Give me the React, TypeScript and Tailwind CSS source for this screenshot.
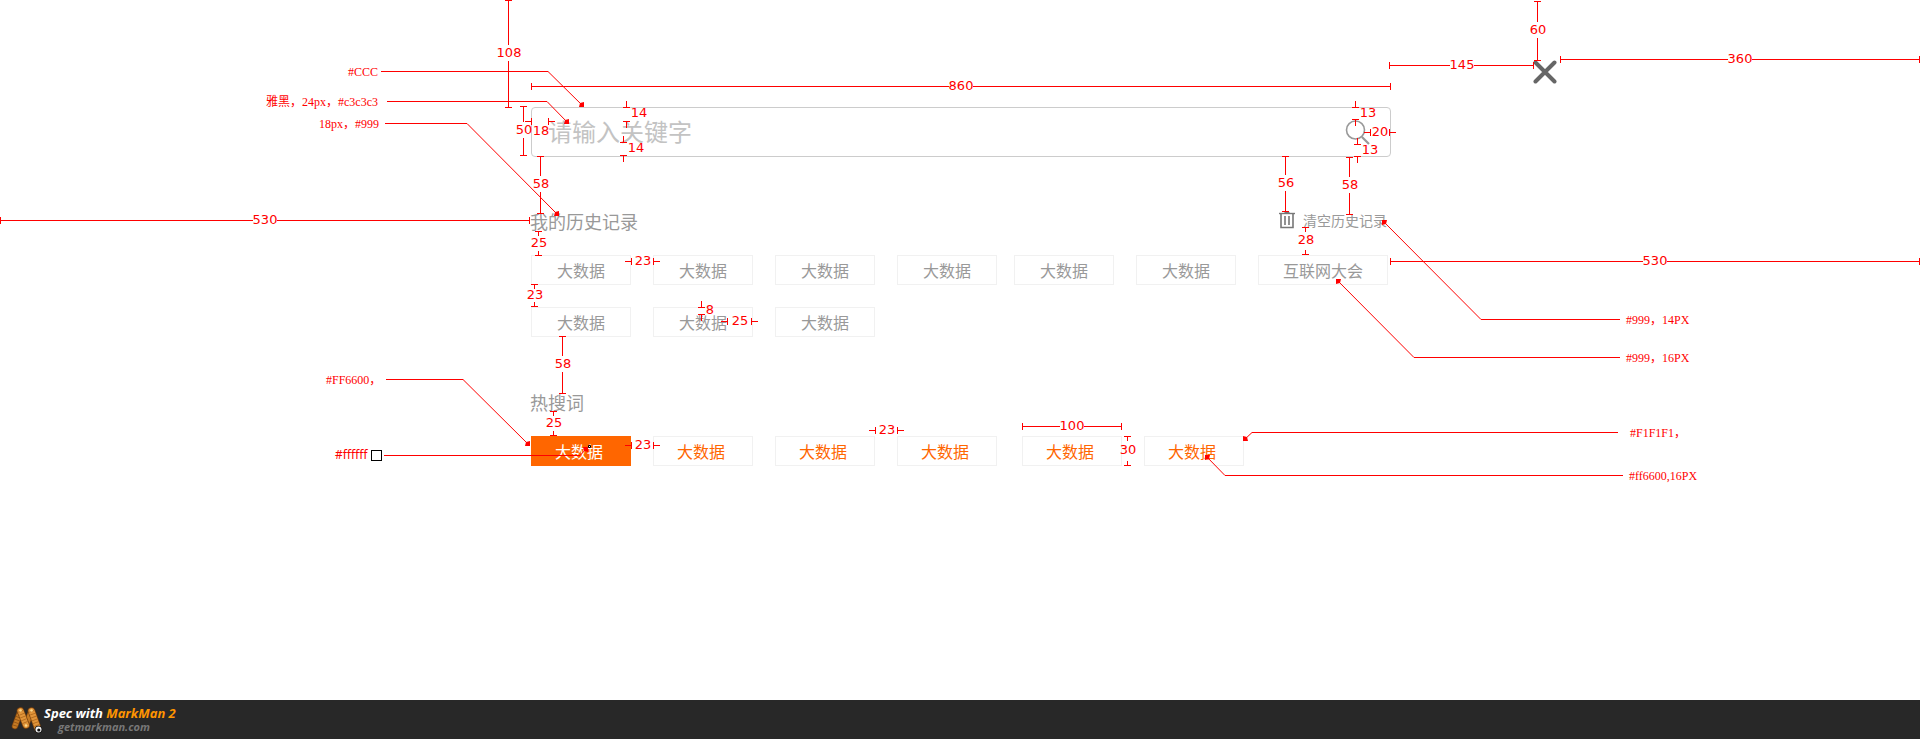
import type { FormEvent } from "react";

type Span = {
  axis: "h" | "v";
  /** Fixed coordinate of the line on the other axis. */
  at: number;
  from: number;
  to: number;
  /** Where the stems run: along the whole span, or short stubs inside or outside of it. */
  stems: "full" | "inside" | "outside";
  text: string;
  x: number;
  y: number;
};

const spans: Span[] = [
  { axis: "v", at: 508, from: 0, to: 107, stems: "full", text: "108", x: 509, y: 53 },
  { axis: "h", at: 86, from: 531, to: 1390, stems: "full", text: "860", x: 961, y: 86 },
  { axis: "v", at: 523, from: 106, to: 155, stems: "full", text: "50", x: 524, y: 130 },
  { axis: "h", at: 121, from: 531, to: 548, stems: "outside", text: "18", x: 541, y: 131 },
  { axis: "v", at: 626, from: 107, to: 121, stems: "outside", text: "14", x: 639, y: 113 },
  { axis: "v", at: 623, from: 142, to: 155, stems: "outside", text: "14", x: 636, y: 148 },
  { axis: "v", at: 540, from: 156, to: 213, stems: "full", text: "58", x: 541, y: 184 },
  { axis: "h", at: 220, from: 0, to: 529, stems: "full", text: "530", x: 265, y: 220 },
  { axis: "v", at: 538, from: 231, to: 255, stems: "inside", text: "25", x: 539, y: 243 },
  { axis: "v", at: 534, from: 284, to: 306, stems: "inside", text: "23", x: 535, y: 295 },
  { axis: "h", at: 261, from: 631, to: 653, stems: "outside", text: "23", x: 643, y: 261 },
  { axis: "v", at: 701, from: 307, to: 314, stems: "outside", text: "8", x: 710, y: 310 },
  { axis: "h", at: 321, from: 727, to: 751, stems: "outside", text: "25", x: 740, y: 321 },
  { axis: "v", at: 562, from: 336, to: 393, stems: "full", text: "58", x: 563, y: 364 },
  { axis: "v", at: 553, from: 411, to: 435, stems: "inside", text: "25", x: 554, y: 423 },
  { axis: "v", at: 1537, from: 1, to: 60, stems: "full", text: "60", x: 1538, y: 30 },
  { axis: "h", at: 65, from: 1389, to: 1533, stems: "full", text: "145", x: 1462, y: 65 },
  { axis: "h", at: 59, from: 1560, to: 1919, stems: "full", text: "360", x: 1740, y: 59 },
  { axis: "v", at: 1355, from: 107, to: 119, stems: "outside", text: "13", x: 1368, y: 113 },
  { axis: "h", at: 132, from: 1370, to: 1389, stems: "outside", text: "20", x: 1380, y: 132 },
  { axis: "v", at: 1357, from: 144, to: 156, stems: "outside", text: "13", x: 1370, y: 150 },
  { axis: "v", at: 1285, from: 156, to: 211, stems: "full", text: "56", x: 1286, y: 183 },
  { axis: "v", at: 1349, from: 157, to: 214, stems: "full", text: "58", x: 1350, y: 185 },
  { axis: "v", at: 1305, from: 227, to: 254, stems: "inside", text: "28", x: 1306, y: 240 },
  { axis: "h", at: 261, from: 1390, to: 1919, stems: "full", text: "530", x: 1655, y: 261 },
  { axis: "h", at: 445, from: 631, to: 653, stems: "outside", text: "23", x: 643, y: 445 },
  { axis: "h", at: 430, from: 875, to: 897, stems: "outside", text: "23", x: 887, y: 430 },
  { axis: "h", at: 426, from: 1022, to: 1121, stems: "full", text: "100", x: 1072, y: 426 },
  { axis: "v", at: 1127, from: 436, to: 465, stems: "inside", text: "30", x: 1128, y: 450 },
];

/** Leader line: start of the level part, its bend, and the arrow tip. */
type Leader = { start: number; bend: number; y: number; tipX: number; tipY: number };

const leaders: Leader[] = [
  { start: 381, bend: 548, y: 71, tipX: 584, tipY: 107 },
  { start: 387, bend: 547, y: 101, tipX: 569, tipY: 124 },
  { start: 385, bend: 467, y: 123, tipX: 559, tipY: 216 },
  { start: 386, bend: 463, y: 379, tipX: 530, tipY: 446 },
  { start: 384, bend: 580, y: 455, tipX: 588, tipY: 447 },
  { start: 1620, bend: 1481, y: 319, tipX: 1382, tipY: 220 },
  { start: 1620, bend: 1414, y: 357, tipX: 1336, tipY: 279 },
  { start: 1618, bend: 1252, y: 432, tipX: 1243, tipY: 441 },
  { start: 1623, bend: 1225, y: 475, tipX: 1205, tipY: 455 },
];

const notes = [
  { text: "#CCC", x: 348, y: 72 },
  { text: "雅黑，24px，#c3c3c3", x: 266, y: 102 },
  { text: "18px，#999", x: 319, y: 124 },
  { text: "#FF6600，", x: 326, y: 380 },
  { text: "#999，14PX", x: 1626, y: 320 },
  { text: "#999，16PX", x: 1626, y: 358 },
  { text: "#F1F1F1，", x: 1630, y: 433 },
  { text: "#ff6600,16PX", x: 1629, y: 476 },
];

function spanPath({ axis, at, from, to, stems, text, x, y }: Span) {
  const half = axis === "h" ? text.length * 4 : 8;
  const mid = axis === "h" ? x : y;
  const runs: [number, number][] =
    stems === "full"
      ? [
          [from, mid - half],
          [mid + half, to + 1],
        ]
      : stems === "inside"
        ? [
            [from, from + 5],
            [to - 4, to + 1],
          ]
        : [
            [from - 6, from],
            [to, to + 7],
          ];
  const a = at + 0.5;
  return axis === "h"
    ? runs.map(([s, e]) => `M${s} ${a}H${e}`).join("") +
        `M${from + 0.5} ${at - 3}v7M${to + 0.5} ${at - 3}v7`
    : runs.map(([s, e]) => `M${a} ${s}V${e}`).join("") +
        `M${at - 3} ${from + 0.5}h7M${at - 3} ${to + 0.5}h7`;
}

function LeaderLine({ start, bend, y, tipX, tipY }: Leader) {
  const dx = Math.sign(bend - tipX);
  const dy = Math.sign(y - tipY);
  return (
    <>
      <path d={`M${start} ${y + 0.5}H${bend}`} stroke="#f00" />
      <path d={`M${bend} ${y + 0.5}L${tipX} ${tipY}`} stroke="#f00" />
      <path
        d={`M${tipX} ${tipY}L${tipX + dx * 5} ${tipY}L${tipX + dx * 4} ${tipY + dy * 4}L${tipX} ${tipY + dy * 5}z`}
        fill="#f00"
      />
    </>
  );
}

function Annotations() {
  return (
    <div className="pointer-events-none absolute left-1/2 top-0 h-[700px] w-[1920px] -translate-x-1/2 text-[#f00]">
      <svg width="1920" height="700" fill="none" className="block" aria-hidden="true">
        {spans.map((span, i) => (
          <path key={i} d={spanPath(span)} stroke="#f00" />
        ))}
        {leaders.map((leader, i) => (
          <LeaderLine key={i} {...leader} />
        ))}
        <path d="M588.5 445.5h2v2h-2z" fill="#fff" stroke="#000" />
      </svg>
      {spans.map((span, i) => (
        <span
          key={i}
          className="absolute -translate-x-1/2 -translate-y-1/2 font-['DejaVu_Sans',sans-serif] text-[13px] leading-4"
          style={{ left: span.x, top: span.y }}
        >
          {span.text}
        </span>
      ))}
      {notes.map((note) => (
        <span
          key={note.text}
          className="absolute -translate-y-1/2 whitespace-nowrap font-['Liberation_Serif','Noto_Sans_CJK_SC',serif] text-xs leading-4"
          style={{ left: note.x, top: note.y }}
        >
          {note.text}
        </span>
      ))}
      <span className="absolute left-[335px] top-[447px] flex items-center gap-[3px] font-['Noto_Sans',sans-serif] text-xs leading-4">
        #ffffff
        <span className="size-[11px] border border-black bg-white" />
      </span>
    </div>
  );
}

function SearchIcon() {
  return (
    <svg width="25" height="25" viewBox="0 0 25 25" fill="none" stroke="#999" aria-hidden="true">
      <circle cx="10.5" cy="10" r="9" strokeWidth="1.6" />
      <path d="M17 17l7 7" strokeWidth="2.2" />
    </svg>
  );
}

function TrashIcon() {
  return (
    <svg width="16" height="18" viewBox="0 0 16 18" fill="none" stroke="#777" aria-hidden="true">
      <path d="M5.5 1.5h5" />
      <path d="M0 2.5h16" strokeWidth="1.4" />
      <path d="M2 3v13.5h12V3" strokeWidth="1.6" />
      <path d="M6 5v9M10 5v9" strokeWidth="1.6" />
    </svg>
  );
}

function CloseIcon() {
  return (
    <svg width="24" height="24" viewBox="0 0 24 24" fill="none" stroke="#666" strokeWidth="4" strokeLinecap="round" aria-hidden="true">
      <path d="M2.5 2.5l19 19M21.5 2.5l-19 19" />
    </svg>
  );
}

function MarkManLogo() {
  return (
    <svg width="36" height="36" viewBox="0 0 36 36" fill="none" strokeLinecap="round" strokeLinejoin="round" aria-hidden="true">
      <path d="M7 24L12.5 9" stroke="#7a420e" strokeWidth="6.5" />
      <path d="M7 24L12.5 9" stroke="#c47a24" strokeWidth="5" />
      <path d="M7 24L12.5 9" stroke="#8f5115" strokeWidth="5" strokeDasharray="0.8 2.2" strokeLinecap="butt" />
      <path d="M18 23L23.5 9" stroke="#7a420e" strokeWidth="6.5" />
      <path d="M18 23L23.5 9" stroke="#c47a24" strokeWidth="5" />
      <path d="M12.5 9L18 23M23.5 9L30 27" stroke="#7a420e" strokeWidth="7.5" />
      <path d="M12.5 9L18 23M23.5 9L30 27" stroke="#e0943a" strokeWidth="6" />
      <path d="M12.5 9L18 23M23.5 9L30 27" stroke="#b06a1e" strokeWidth="6" strokeDasharray="0.8 2.2" strokeLinecap="butt" />
      <circle cx="12.5" cy="8.5" r="1.3" fill="#ffd98a" />
      <circle cx="23.5" cy="8.5" r="1.3" fill="#ffd98a" />
      <circle cx="18" cy="23.5" r="1.3" fill="#ffd98a" />
      <circle cx="30.5" cy="27.5" r="3.8" fill="#111" />
      <circle cx="30.5" cy="27.5" r="3" fill="#f4f4f4" />
      <circle cx="30.8" cy="28" r="1.6" fill="#111" />
    </svg>
  );
}

type TagTone = "history" | "active" | "hot";

const tagTone: Record<TagTone, string> = {
  history: "border-[#f1f1f1] px-6 text-[#999]",
  active: "border-[#ff6600] bg-[#ff6600] pl-[23px] pr-[27px] text-white",
  hot: "border-[#f1f1f1] pl-[23px] pr-[27px] text-[#ff6600]",
};

function Tag({ label, tone }: { label: string; tone: TagTone }) {
  return (
    <li>
      <button
        type="button"
        className={`block h-[30px] min-w-[100px] whitespace-nowrap border pb-px text-base leading-6 ${tagTone[tone]}`}
      >
        {label}
      </button>
    </li>
  );
}

function TagGroup({ labels, tone, firstActive }: { labels: string[]; tone: TagTone; firstActive?: boolean }) {
  return (
    <ul className="flex flex-wrap gap-[22px]">
      {labels.map((label, i) => (
        <Tag key={i} label={label} tone={firstActive && i === 0 ? "active" : tone} />
      ))}
    </ul>
  );
}

const term = "大数据";

export default function App() {
  const onSubmit = (event: FormEvent) => event.preventDefault();

  return (
    <div className="relative flex min-h-screen flex-col overflow-hidden bg-white font-['Noto_Sans_CJK_SC',sans-serif] text-[#999]">
      <header className="grid grid-cols-[1fr_minmax(0,860px)_1fr] items-start pl-0.5 pt-[60px]">
        <form
          onSubmit={onSubmit}
          className="col-start-2 mt-[47px] flex h-[50px] items-center rounded border border-[#ccc] bg-white pl-4 pr-5"
        >
          <input
            type="search"
            aria-label="请输入关键字"
            placeholder="请输入关键字"
            className="h-full min-w-0 flex-1 bg-transparent pb-1 text-2xl text-[#999] outline-none placeholder:text-[#c3c3c3]"
          />
          <button type="submit" aria-label="搜索">
            <SearchIcon />
          </button>
        </form>
        <button type="button" aria-label="关闭" className="ml-[142px] w-6">
          <CloseIcon />
        </button>
      </header>

      <main className="grid flex-1 grid-cols-[1fr_minmax(0,860px)_1fr] content-start">
        <section className="col-start-2 mt-[53px]">
          <div className="flex h-6 items-center justify-between pr-[3px]">
            <h2 className="pb-0.5 text-lg leading-[22px]">我的历史记录</h2>
            <button type="button" className="flex items-center gap-2 pb-1 text-sm leading-5">
              <TrashIcon />
              清空历史记录
            </button>
          </div>
          <div className="mt-[21px] flex flex-wrap gap-x-[17px] gap-y-[22px] pl-px">
            <TagGroup labels={[term, term, term, term]} tone="history" />
            <TagGroup labels={[term, term, "互联网大会"]} tone="history" />
            <TagGroup labels={[term, term, term]} tone="history" />
          </div>
        </section>

        <section className="col-start-2 mt-[54px]">
          <h2 className="pb-0.5 text-lg leading-[22px]">热搜词</h2>
          <div className="mt-[21px] flex flex-wrap gap-x-[25px] gap-y-[22px] pl-px">
            <TagGroup labels={[term, term, term, term]} tone="hot" firstActive />
            <TagGroup labels={[term, term]} tone="hot" />
          </div>
        </section>
      </main>

      <Annotations />

      <footer className="flex h-[39px] items-center bg-[#282828] pl-2 font-['Open_Sans',sans-serif] font-bold italic">
        <MarkManLogo />
        <p className="text-[13px] leading-[14px] text-white">
          Spec with <span className="text-[#ff9500]">MarkMan 2</span>
          <a href="#getmarkman" className="block pl-[14px] text-[11px] leading-[14px] text-[#777]">
            getmarkman.com
          </a>
        </p>
      </footer>
    </div>
  );
}
